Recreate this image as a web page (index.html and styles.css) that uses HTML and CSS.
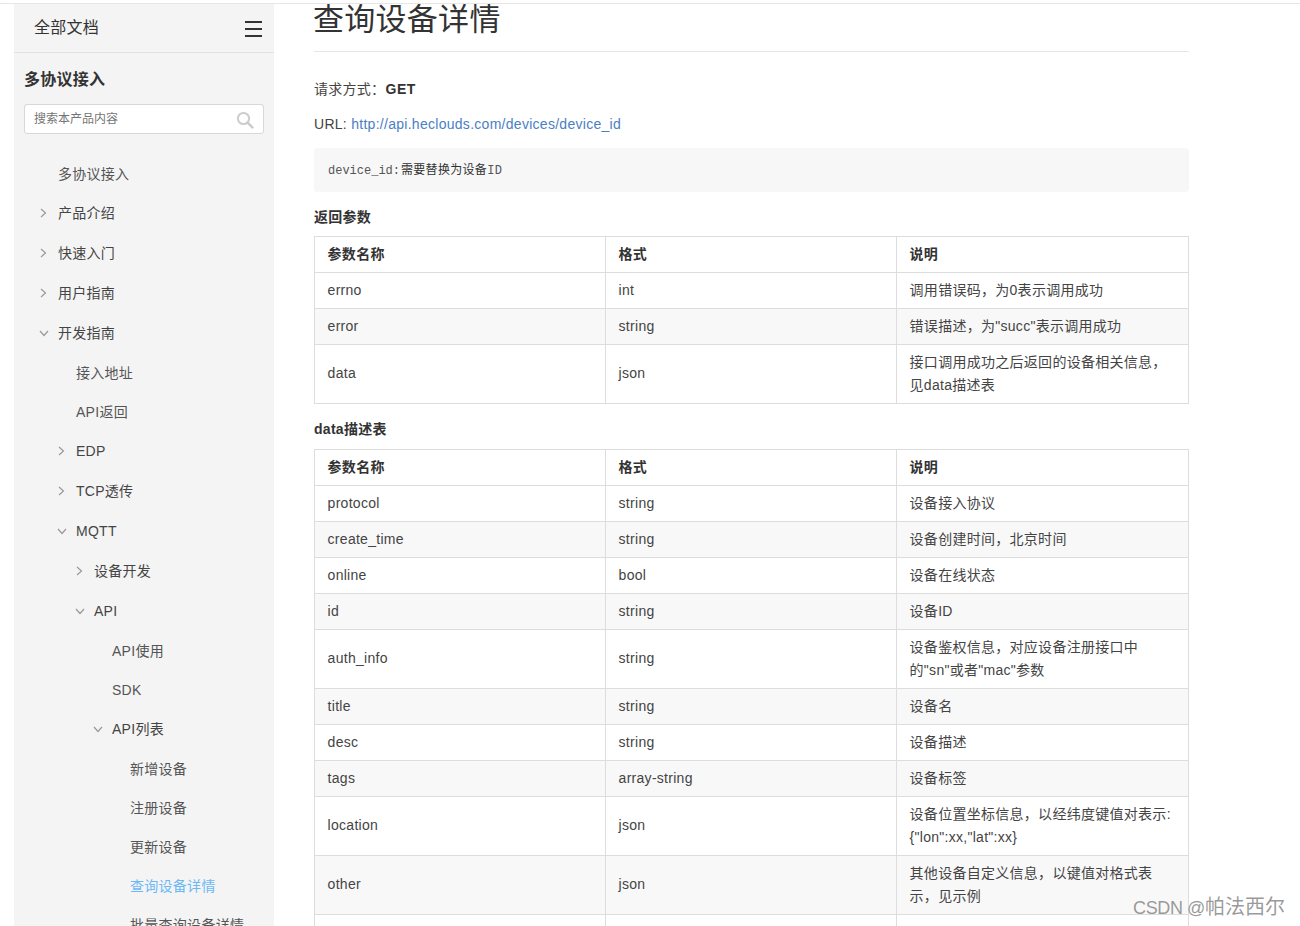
FILE: index.html
```html
<!DOCTYPE html>
<html lang="zh-CN">
<head>
<meta charset="utf-8">
<title>查询设备详情</title>
<link rel="stylesheet" href="styles.css">
</head>
<body>
<div class="topline"></div>
<div class="page">
  <aside class="sidebar">
    <div class="side-head">
      <span>全部文档</span>
      <span class="burger"><i></i><i></i><i></i></span>
    </div>
    <div class="side-title">多协议接入</div>
    <div class="search">
      <span>搜索本产品内容</span>
      <svg class="search-icon" width="18" height="18" viewBox="0 0 18 18"><circle cx="7.5" cy="7.5" r="5.6" fill="none" stroke="#ccc" stroke-width="2"/><path d="M11.6 11.6 16.4 16.4" stroke="#ccc" stroke-width="2.6" stroke-linecap="round"/></svg>
    </div>
    <nav class="tree">
      <a class="item l0">多协议接入</a>
      <a class="item branch l0"><svg class="chev" viewBox="0 0 10 10"><path d="M2 1l4.5 4L2 9"/></svg>产品介绍</a>
      <a class="item branch l0"><svg class="chev" viewBox="0 0 10 10"><path d="M2 1l4.5 4L2 9"/></svg>快速入门</a>
      <a class="item branch l0"><svg class="chev" viewBox="0 0 10 10"><path d="M2 1l4.5 4L2 9"/></svg>用户指南</a>
      <a class="item branch l0"><svg class="chev" viewBox="0 0 10 10"><path d="M1 3l4 4.5L9 3"/></svg>开发指南</a>
      <a class="item l1">接入地址</a>
      <a class="item l1">API返回</a>
      <a class="item branch l1"><svg class="chev" viewBox="0 0 10 10"><path d="M2 1l4.5 4L2 9"/></svg>EDP</a>
      <a class="item branch l1"><svg class="chev" viewBox="0 0 10 10"><path d="M2 1l4.5 4L2 9"/></svg>TCP透传</a>
      <a class="item branch l1"><svg class="chev" viewBox="0 0 10 10"><path d="M1 3l4 4.5L9 3"/></svg>MQTT</a>
      <a class="item branch l2"><svg class="chev" viewBox="0 0 10 10"><path d="M2 1l4.5 4L2 9"/></svg>设备开发</a>
      <a class="item branch l2"><svg class="chev" viewBox="0 0 10 10"><path d="M1 3l4 4.5L9 3"/></svg>API</a>
      <a class="item l3">API使用</a>
      <a class="item l3">SDK</a>
      <a class="item branch l3"><svg class="chev" viewBox="0 0 10 10"><path d="M1 3l4 4.5L9 3"/></svg>API列表</a>
      <a class="item l4">新增设备</a>
      <a class="item l4">注册设备</a>
      <a class="item l4">更新设备</a>
      <a class="item l4 active">查询设备详情</a>
      <a class="item l4">批量查询设备详情</a>
    </nav>
  </aside>
  <main class="content">
    <h1>查询设备详情</h1>
    <p class="line first">请求方式：<strong class="method">GET</strong></p>
    <p class="line">URL: <a class="link">http://api.heclouds.com/devices/device_id</a></p>
    <div class="code"><code class="code-key">device_id:</code><span class="code-cn">需要替换为设备<code class="code-id">ID</code></span></div>
    <p class="label label-a">返回参数</p>
    <table>
      <thead><tr><th>参数名称</th><th>格式</th><th>说明</th></tr></thead>
      <tbody>
        <tr><td>errno</td><td>int</td><td>调用错误码，为0表示调用成功</td></tr>
        <tr><td>error</td><td>string</td><td>错误描述，为"succ"表示调用成功</td></tr>
        <tr class="tall"><td>data</td><td>json</td><td>接口调用成功之后返回的设备相关信息，<br>见data描述表</td></tr>
      </tbody>
    </table>
    <p class="label label-b">data描述表</p>
    <table>
      <thead><tr><th>参数名称</th><th>格式</th><th>说明</th></tr></thead>
      <tbody>
        <tr><td>protocol</td><td>string</td><td>设备接入协议</td></tr>
        <tr><td>create_time</td><td>string</td><td>设备创建时间，北京时间</td></tr>
        <tr><td>online</td><td>bool</td><td>设备在线状态</td></tr>
        <tr><td>id</td><td>string</td><td>设备ID</td></tr>
        <tr class="tall"><td>auth_info</td><td>string</td><td>设备鉴权信息，对应设备注册接口中<br>的"sn"或者"mac"参数</td></tr>
        <tr><td>title</td><td>string</td><td>设备名</td></tr>
        <tr><td>desc</td><td>string</td><td>设备描述</td></tr>
        <tr><td>tags</td><td>array-string</td><td>设备标签</td></tr>
        <tr class="tall"><td>location</td><td>json</td><td>设备位置坐标信息，以经纬度键值对表示:<br>{"lon":xx,"lat":xx}</td></tr>
        <tr class="tall"><td>other</td><td>json</td><td>其他设备自定义信息，以键值对格式表<br>示，见示例</td></tr>
        <tr><td>&nbsp;</td><td>&nbsp;</td><td>&nbsp;</td></tr>
      </tbody>
    </table>
  </main>
</div>
<div class="watermark"><span class="wm-latin">CSDN @</span>帕法西尔</div>
</body>
</html>
```

FILE: styles.css
```css
* { box-sizing: border-box; }
html, body { margin: 0; height: 926px; overflow: hidden; background: #fff; }
body {
  position: relative;
  font: 14px/23px "Liberation Sans", "Noto Sans CJK SC", sans-serif;
  letter-spacing: .28px;
  color: #444;
}
.topline { height: 4px; border-bottom: 1px solid #e6e6e6; }
.page { display: flex; height: 922px; overflow: hidden; }

.sidebar { flex: 0 0 260px; margin-left: 14px; background: #f4f4f4; overflow: hidden; }
.side-head {
  display: flex; align-items: center; justify-content: space-between;
  height: 49px; padding: 0 12px 2px 20px;
  border-bottom: 1px solid #e2e2e2;
  font-size: 16px; color: #333;
}
.burger { display: flex; flex-direction: column; gap: 5px; width: 17px; padding-top: 3px; }
.burger i { display: block; height: 2px; background: #333; }
.side-title { margin: 16px 0 0 10px; font-size: 16px; line-height: 22px; font-weight: 700; color: #333; }
.search {
  display: flex; align-items: center; justify-content: space-between;
  height: 30px; margin: 13px 10px 0; padding: 0 9px 0 9px;
  background: #fff; border: 1px solid #d8d8d8; border-radius: 3px;
  font-size: 12px; letter-spacing: 0; color: #757575;
}
.search-icon { margin-top: 2px; }
.tree { margin-top: 20px; }
.item { display: flex; align-items: center; height: 39px; padding-top: 2px; color: #555; position: relative; }
.branch { height: 40px; padding-top: 0; color: #444; }
.active { color: #6cb8f6; }
.l0 { padding-left: 44px; }
.l1 { padding-left: 62px; }
.l2 { padding-left: 80px; }
.l3 { padding-left: 98px; }
.l4 { padding-left: 116px; }
.chev { position: absolute; width: 10px; height: 10px; margin-left: -19px; fill: none; stroke: #999; stroke-width: 1.2; }

.content { flex: 0 0 875px; margin-left: 40px; overflow: hidden; }
h1 {
  margin: 0; padding-bottom: 16px; border-bottom: 1px solid #e6e6e6;
  font-size: 31px; line-height: 31px; font-weight: 400; color: #333;
  text-indent: -1px;
}
.line { margin: 0 0 12px; }
.first { margin-top: 26px; }
.method { color: #333; letter-spacing: .6px; }
.link { color: #4a80c4; }
.code {
  height: 44px; padding: 11px 14px; background: #f7f7f7; border-radius: 3px;
  font-size: 12px; line-height: 22px; letter-spacing: 0;
}
.code-key, .code-id { font: 12px/22px "Liberation Mono", monospace; color: #555; }
.code-cn { margin-left: 1px; letter-spacing: .3px; color: #333; }
.label { margin: 0 0 8px; font-weight: 700; color: #333; }
.label-a { margin-top: 14px; margin-bottom: 7px; }
.label-b { margin-top: 14px; }

table { width: 875px; border-collapse: collapse; table-layout: fixed; }
th, td { padding: 6px 13px 6px 12.6px; border: 1px solid #ddd; text-align: left; vertical-align: middle; }
th { font-weight: 700; color: #333; }
th:nth-child(-n+2) { width: 291px; }
tbody tr:nth-child(even) { background: #f8f8f8; }
.tall td:not(:last-child) { padding-top: 5px; padding-bottom: 7px; }
.watermark {
  position: absolute; right: 15px; top: 893px;
  font-size: 20px; line-height: 28px; letter-spacing: 0; color: rgba(120,120,120,.75);
}
.wm-latin { font-size: 18px; letter-spacing: -.4px; }
```
